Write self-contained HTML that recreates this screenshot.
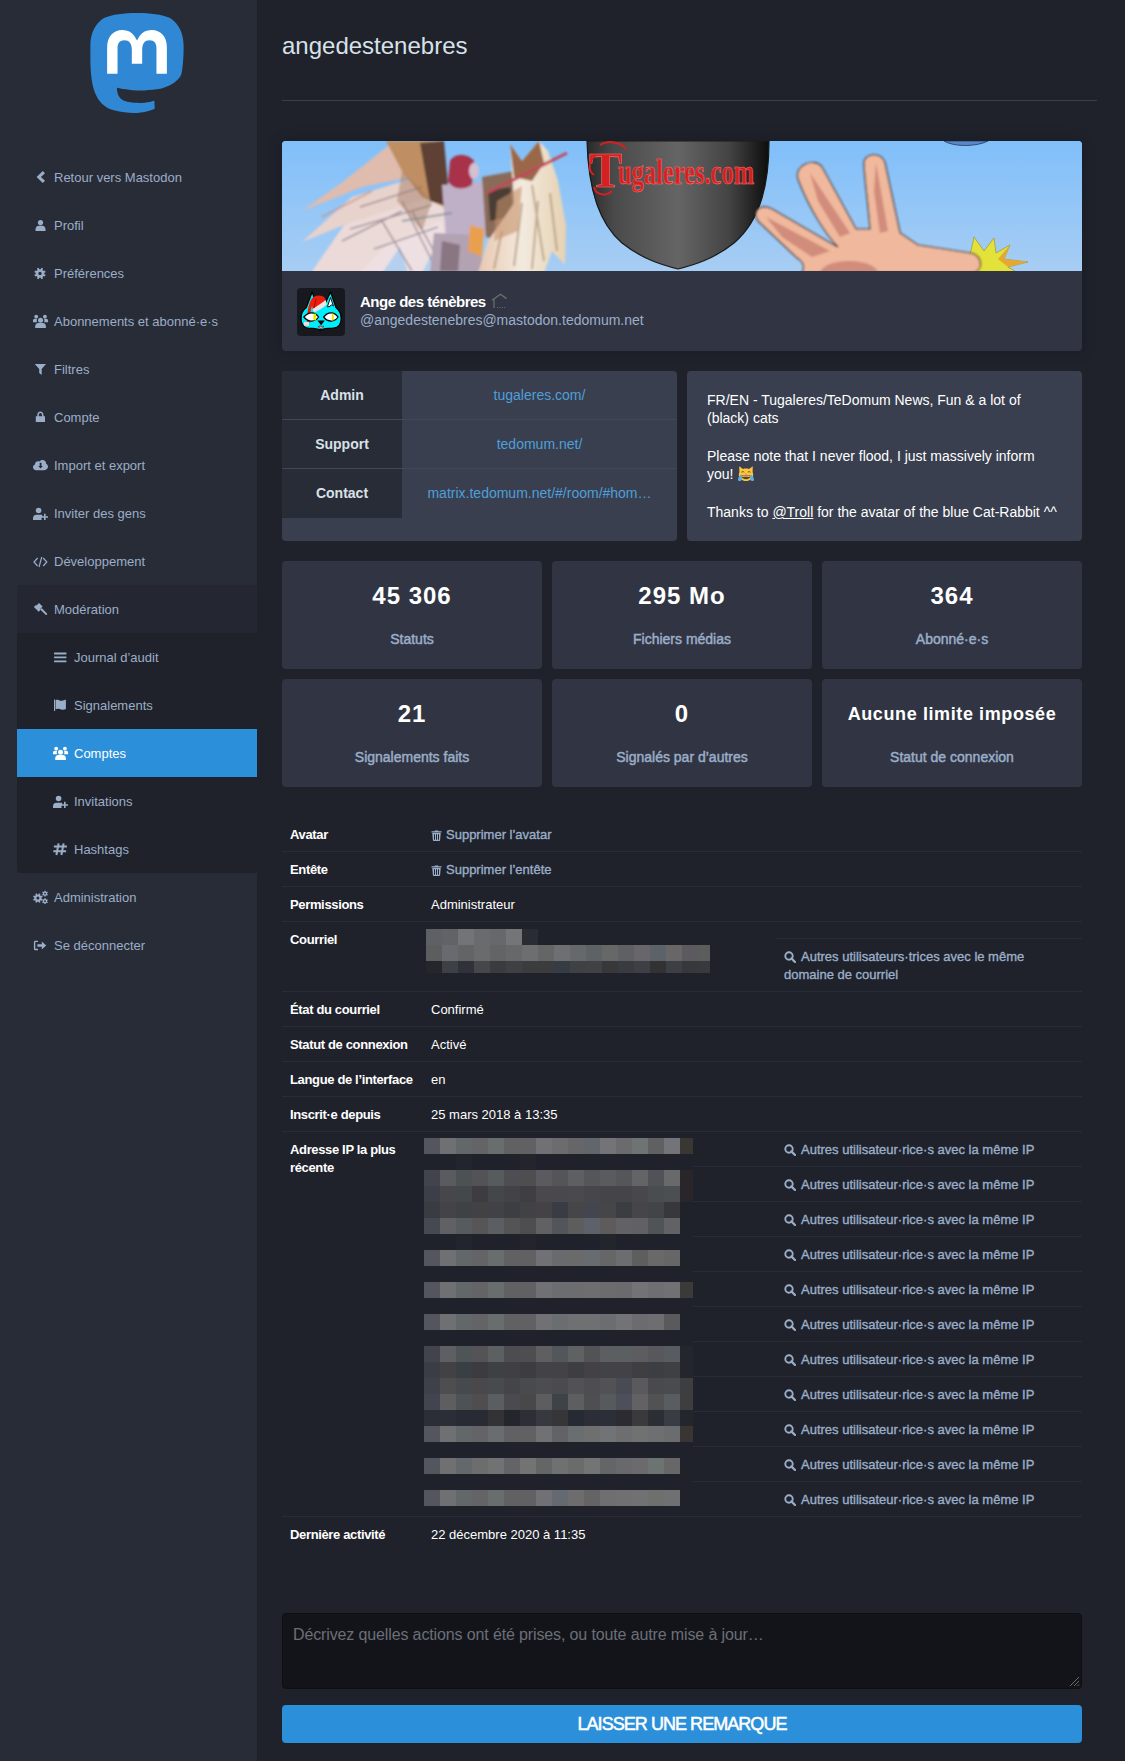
<!DOCTYPE html>
<html><head><meta charset="utf-8">
<style>
*{box-sizing:border-box;margin:0;padding:0}
html,body{width:1125px;height:1761px;overflow:hidden}
body{background:#1f222b;font-family:"Liberation Sans",sans-serif;color:#fff;position:relative}
.abs{position:absolute}
#side{position:absolute;left:0;top:0;width:257px;height:1761px;background:#282c37}
#logo{position:absolute;left:90px;top:13px;width:94px;height:100px}
.nav{position:absolute;left:17px;width:240px;height:48px;font-size:13px;line-height:18px;color:#9baec8;white-space:nowrap}
.nav svg{position:absolute;top:16px;width:16px;height:16px;fill:currentColor;overflow:visible}
.nav span{position:absolute;top:16px}
#modbg{position:absolute;left:17px;top:585px;width:240px;height:288px;background:#1f222b;border-radius:4px 0 0 4px;overflow:hidden}
#modhead{position:absolute;left:0;top:0;width:240px;height:48px;background:#242731}
.nav.active{background:#2b90d9;color:#fff}
.dl{display:flex;height:49px;border-bottom:1px solid #42485a}.dl:last-child{border-bottom:0}
.dt{width:120px;flex:0 0 auto;padding:14px;text-align:center;background:#282c37;color:#d9e1e8;font-weight:bold;white-space:nowrap}
.dd{flex:1 1 auto;padding:14px;text-align:center;white-space:nowrap;overflow:hidden}
.dd a{color:#4e9fd9;text-decoration:none}
.stat{position:absolute;width:260px;height:108px;background:#313543;border-radius:4px;padding:20px;text-align:center}
.num{font-size:24px;line-height:30px;font-weight:bold;color:#fff;margin-bottom:20px;white-space:nowrap;letter-spacing:1px}
.num.txt{font-size:18px;letter-spacing:0.6px}
.lbl{font-size:14px;line-height:17px;color:#9baec8;font-weight:normal;-webkit-text-stroke:0.45px #9baec8}
.hl{position:absolute;height:1px;background:#282c37}
.th,.td,.lk{position:absolute;font-size:13px;line-height:18px;white-space:nowrap}
.th{font-weight:bold;color:#fff;letter-spacing:-0.35px}
.td{color:#fff}
.lk{color:#9baec8;-webkit-text-stroke:0.35px #9baec8}
.lk .ic{position:absolute;fill:currentColor}
</style></head><body>
<div id="side">
<svg id="logo" viewBox="0 0 216.4144 232.00976"><path d="M211.80734 139.0875c-3.18125 16.36625-28.4925 34.2775-57.5625 37.74875-15.15875 1.80875-30.08375 3.47125-45.99875 2.74125-26.0275-1.1925-46.565-6.2125-46.565-6.2125 0 2.53375.15625 4.94625.46875 7.2025 3.38375 25.68625 25.47 27.225 46.39125 27.9425 21.11625.7225 39.91875-5.20625 39.91875-5.20625l.8675 19.09s-14.77 7.93125-41.08125 9.39c-14.50875.7975-32.52375-.365-53.50625-5.91875C9.23234 213.82 1.40609 165.31125.20859 116.09125c-.365-14.61375-.14-28.39375-.14-39.91875 0-50.33 32.97625-65.0825 32.97625-65.0825C49.67234 3.45375 78.20359.2425 107.86484 0h.72875c29.66125.2425 58.21125 3.45375 74.8375 11.09 0 0 32.975 14.7525 32.975 65.0825 0 0 .41375 37.13375-4.59875 62.915" fill="#3088d4"/><path d="M177.50984 80.077v60.94125h-24.14375v-59.15c0-12.46875-5.24625-18.7975-15.74-18.7975-11.6025 0-17.4175 7.5075-17.4175 22.3525v32.37625H96.20734V85.42325c0-14.845-5.81625-22.3525-17.41875-22.3525-10.49375 0-15.74 6.32875-15.74 18.7975v59.15H38.90484V80.077c0-12.455 3.17125-22.3525 9.54125-29.675 6.56875-7.3225 15.17125-11.07625 25.85-11.07625 12.355 0 21.71125 4.74875 27.8975 14.2475l6.01375 10.08125 6.015-10.08125c6.185-9.49875 15.54125-14.2475 27.8975-14.2475 10.6775 0 19.28 3.75375 25.85 11.07625 6.36875 7.3225 9.54 17.22 9.54 29.675" fill="#fff"/></svg>
<div id="modbg"><div id="modhead"></div></div>
<div class="nav" style="top:153px"><svg viewBox="0 0 16 16" style="left:16px"><polygon points="9.8,2 12,4.2 7.9,8 12,11.8 9.8,14 3.6,8"/></svg><span style="left:37px">Retour vers Mastodon</span></div>
<div class="nav" style="top:201px"><svg viewBox="0 0 16 16" style="left:16px"><circle cx="7.5" cy="5.6" r="2.6"/><path d="M2.5 14v-1.6c0-2.1 1.4-3.6 3.2-3.6h3.6c1.8 0 3.2 1.5 3.2 3.6V14z"/></svg><span style="left:37px">Profil</span></div>
<div class="nav" style="top:249px"><svg viewBox="0 0 16 16" style="left:16px"><path fill-rule="evenodd" d="M11.30 8.50 L11.23 9.28 L12.65 9.81 L11.92 11.57 L10.54 10.94 L10.04 11.54 L9.44 12.04 L10.07 13.42 L8.31 14.15 L7.78 12.73 L7.00 12.80 L6.22 12.73 L5.69 14.15 L3.93 13.42 L4.56 12.04 L3.96 11.54 L3.46 10.94 L2.08 11.57 L1.35 9.81 L2.77 9.28 L2.70 8.50 L2.77 7.72 L1.35 7.19 L2.08 5.43 L3.46 6.06 L3.96 5.46 L4.56 4.96 L3.93 3.58 L5.69 2.85 L6.22 4.27 L7.00 4.20 L7.78 4.27 L8.31 2.85 L10.07 3.58 L9.44 4.96 L10.04 5.46 L10.54 6.06 L11.92 5.43 L12.65 7.19 L11.23 7.72ZM8.70 8.50 A1.7 1.7 0 1 0 5.30 8.50 A1.7 1.7 0 1 0 8.70 8.50Z"/></svg><span style="left:37px">Préférences</span></div>
<div class="nav" style="top:297px"><svg viewBox="0 0 16 16" style="left:16px"><circle cx="3.2" cy="3.6" r="1.9"/><circle cx="11.9" cy="3.6" r="1.9"/><path d="M0 9.2V7.6c0-1 .7-1.9 1.7-1.9h2.6c-.4.5-.6 1.2-.6 1.9 0 .6.1 1.1.4 1.6zM15.1 9.2V7.6c0-1-.7-1.9-1.7-1.9h-2.6c.4.5.6 1.2.6 1.9 0 .6-.1 1.1-.4 1.6z"/><circle cx="7.55" cy="7.3" r="2.5"/><path d="M2.2 15v-1.6c0-2 1.3-3.4 3-3.4h4.7c1.7 0 3 1.4 3 3.4V15z"/></svg><span style="left:37px">Abonnements et abonné·e·s</span></div>
<div class="nav" style="top:345px"><svg viewBox="0 0 16 16" style="left:16px"><polygon points="1.8,3 13,3 8.7,8 8.7,14 6.2,12 6.2,8"/></svg><span style="left:37px">Filtres</span></div>
<div class="nav" style="top:393px"><svg viewBox="0 0 16 16" style="left:16px"><path fill-rule="evenodd" d="M2.8 7.2h9.2V13H2.8zM4.3 7.2V5.9c0-2 1.3-3.3 3.1-3.3s3.1 1.3 3.1 3.3v1.3H9V6c0-1.1-.6-1.9-1.6-1.9S5.8 4.9 5.8 6v1.2z"/></svg><span style="left:37px">Compte</span></div>
<div class="nav" style="top:441px"><svg viewBox="0 0 16 16" style="left:16px"><path fill-rule="evenodd" d="M3.2 13.2C1.4 13.2 0 11.9 0 10.3c0-1.3.8-2.3 2-2.7 0-.1 0-.2 0-.3 0-1.7 1.4-3 3.1-3 .5 0 1 .1 1.4.3C7.1 3.6 8.2 3 9.5 3c2 0 3.6 1.5 3.6 3.4v.3c1.1.5 1.9 1.6 1.9 2.9 0 2-1.6 3.6-3.6 3.6z M6.7 5.8v3.1H5.3l2.3 2.6 2.3-2.6H8.5V5.8z"/></svg><span style="left:37px">Import et export</span></div>
<div class="nav" style="top:489px"><svg viewBox="0 0 16 16" style="left:16px"><circle cx="5.6" cy="5.5" r="2.8"/><path d="M0 15v-1.9c0-2 1.4-3.4 3.2-3.4h4.8c.5 0 1 .1 1.4.3-.2.4-.3.7-.3 1.1v1.5H9.3c-.5 0-.9.5-.9 1v.4c0 .5.4 1 .9 1z"/><path d="M11 8.8h1.6v2.4H15v1.6h-2.4v2.2H11v-2.2H8.8v-1.6H11z"/></svg><span style="left:37px">Inviter des gens</span></div>
<div class="nav" style="top:537px"><svg viewBox="0 0 16 16" style="left:16px"><path d="M4.6 5L1 9l3.6 4M10.2 5l3.6 4-3.6 4M8.8 4L6 14" fill="none" stroke="currentColor" stroke-width="1.2"/></svg><span style="left:37px">Développement</span></div>
<div class="nav" style="top:585px"><svg viewBox="0 0 16 16" style="left:16px"><path d="M6 2L9.6 5.6 6.6 8.6 3 5z"/><path d="M.7 8.2L2.7 6.2 7.5 11 5.5 13z" transform="translate(.2 -2.2)"/><path d="M7.2 8.4L8.6 7l5.4 5.4c.3.3.3.8 0 1.1l-.3.3c-.3.3-.8.3-1.1 0z"/></svg><span style="left:37px">Modération</span></div>
<div class="nav" style="top:633px"><svg viewBox="0 0 16 16" style="left:36px"><path d="M1.1 3.6h12.3v1.8H1.1zM1.1 7.5h12.3v1.8H1.1zM1.1 11.4h12.3v1.8H1.1z"/></svg><span style="left:57px">Journal d’audit</span></div>
<div class="nav" style="top:681px"><svg viewBox="0 0 16 16" style="left:36px"><path d="M1 2.6h1.1V14H1z"/><path d="M2.6 3.3c1-.5 2.2-.6 3.4-.1 1.4.6 2.5.7 3.8.3.9-.3 1.7-.5 2.2-.8h.9v9.3c-.8.5-1.8.7-3 .8-1.3 0-2.1-.6-3.5-.9-1.3-.3-2.7-.2-3.8.4z"/></svg><span style="left:57px">Signalements</span></div>
<div class="nav active" style="top:729px"><svg viewBox="0 0 16 16" style="left:36px"><circle cx="3.2" cy="3.6" r="1.9"/><circle cx="11.9" cy="3.6" r="1.9"/><path d="M0 9.2V7.6c0-1 .7-1.9 1.7-1.9h2.6c-.4.5-.6 1.2-.6 1.9 0 .6.1 1.1.4 1.6zM15.1 9.2V7.6c0-1-.7-1.9-1.7-1.9h-2.6c.4.5.6 1.2.6 1.9 0 .6-.1 1.1-.4 1.6z"/><circle cx="7.55" cy="7.3" r="2.5"/><path d="M2.2 15v-1.6c0-2 1.3-3.4 3-3.4h4.7c1.7 0 3 1.4 3 3.4V15z"/></svg><span style="left:57px">Comptes</span></div>
<div class="nav" style="top:777px"><svg viewBox="0 0 16 16" style="left:36px"><circle cx="5.6" cy="5.5" r="2.8"/><path d="M0 15v-1.9c0-2 1.4-3.4 3.2-3.4h4.8c.5 0 1 .1 1.4.3-.2.4-.3.7-.3 1.1v1.5H9.3c-.5 0-.9.5-.9 1v.4c0 .5.4 1 .9 1z"/><path d="M11 8.8h1.6v2.4H15v1.6h-2.4v2.2H11v-2.2H8.8v-1.6H11z"/></svg><span style="left:57px">Invitations</span></div>
<div class="nav" style="top:825px"><svg viewBox="0 0 16 16" style="left:36px"><path d="M3.4 14L5.6 2.4M8.4 14L10.6 2.4M.9 5.6h13M.3 10.2h12.8" fill="none" stroke="currentColor" stroke-width="2"/></svg><span style="left:57px">Hashtags</span></div>
<div class="nav" style="top:873px"><svg viewBox="0 0 16 16" style="left:16px"><path fill-rule="evenodd" d="M8.50 9.10 L8.44 9.75 L9.67 10.21 L9.06 11.69 L7.86 11.14 L7.45 11.65 L6.94 12.06 L7.49 13.26 L6.01 13.87 L5.55 12.64 L4.90 12.70 L4.25 12.64 L3.79 13.87 L2.31 13.26 L2.86 12.06 L2.35 11.65 L1.94 11.14 L0.74 11.69 L0.13 10.21 L1.36 9.75 L1.30 9.10 L1.36 8.45 L0.13 7.99 L0.74 6.51 L1.94 7.06 L2.35 6.55 L2.86 6.14 L2.31 4.94 L3.79 4.33 L4.25 5.56 L4.90 5.50 L5.55 5.56 L6.01 4.33 L7.49 4.94 L6.94 6.14 L7.45 6.55 L7.86 7.06 L9.06 6.51 L9.67 7.99 L8.44 8.45ZM6.40 9.10 A1.5 1.5 0 1 0 3.40 9.10 A1.5 1.5 0 1 0 6.40 9.10Z"/><path fill-rule="evenodd" d="M14.20 4.60 L14.14 5.10 L14.88 5.45 L14.18 6.67 L13.51 6.20 L13.10 6.51 L12.64 6.71 L12.70 7.52 L11.30 7.52 L11.36 6.71 L10.90 6.51 L10.49 6.20 L9.82 6.67 L9.12 5.45 L9.86 5.10 L9.80 4.60 L9.86 4.10 L9.12 3.75 L9.82 2.53 L10.49 3.00 L10.90 2.69 L11.36 2.49 L11.30 1.68 L12.70 1.68 L12.64 2.49 L13.10 2.69 L13.51 3.00 L14.18 2.53 L14.88 3.75 L14.14 4.10ZM12.90 4.60 A0.9 0.9 0 1 0 11.10 4.60 A0.9 0.9 0 1 0 12.90 4.60Z"/><path fill-rule="evenodd" d="M14.20 12.20 L14.14 12.70 L14.88 13.05 L14.18 14.27 L13.51 13.80 L13.10 14.11 L12.64 14.31 L12.70 15.12 L11.30 15.12 L11.36 14.31 L10.90 14.11 L10.49 13.80 L9.82 14.27 L9.12 13.05 L9.86 12.70 L9.80 12.20 L9.86 11.70 L9.12 11.35 L9.82 10.13 L10.49 10.60 L10.90 10.29 L11.36 10.09 L11.30 9.28 L12.70 9.28 L12.64 10.09 L13.10 10.29 L13.51 10.60 L14.18 10.13 L14.88 11.35 L14.14 11.70ZM12.90 12.20 A0.9 0.9 0 1 0 11.10 12.20 A0.9 0.9 0 1 0 12.90 12.20Z"/></svg><span style="left:37px">Administration</span></div>
<div class="nav" style="top:921px"><svg viewBox="0 0 16 16" style="left:16px"><path d="M.9 5.2c0-.8.6-1.5 1.4-1.5H5V5H2.3v6.8H5v1.4H2.3c-.8 0-1.4-.7-1.4-1.5z"/><path d="M4.4 7.3h4.4V4.6l4.4 3.9-4.4 3.9V9.7H4.4z"/></svg><span style="left:37px">Se déconnecter</span></div>
</div>
<div class="abs" style="left:282px;top:32px;font-size:24px;line-height:28px;color:#d9e1e8;white-space:nowrap">angedestenebres</div>
<div class="abs" style="left:282px;top:100px;width:815px;height:1px;background:#393f4f"></div>

<!-- card -->
<div id="card" class="abs" style="left:282px;top:141px;width:800px;height:210px;border-radius:4px;box-shadow:0 0 15px rgba(0,0,0,.2);background:#313543">
  <div id="banner" class="abs" style="left:0;top:0;width:800px;height:130px;border-radius:4px 4px 0 0;overflow:hidden;background:linear-gradient(#80bffa,#a6cdf5)">
  <svg width="800" height="130" viewBox="0 0 800 130" style="position:absolute;left:0;top:0">
<defs>
<linearGradient id="sky" x1="0" y1="0" x2="0" y2="1"><stop offset="0" stop-color="#80bffa"/><stop offset="1" stop-color="#a7cdf3"/></linearGradient>
<linearGradient id="shg" x1="0" y1="0" x2="1" y2="0"><stop offset="0" stop-color="#2a2a2a"/><stop offset=".15" stop-color="#4a4a4a"/><stop offset=".5" stop-color="#656565"/><stop offset=".78" stop-color="#444"/><stop offset="1" stop-color="#0d0d0d"/></linearGradient>
<linearGradient id="lw" x1="0" y1="0" x2="1" y2="0"><stop offset="0" stop-color="#d9a9a0"/><stop offset=".5" stop-color="#ead6d6"/><stop offset="1" stop-color="#d8c2cc"/></linearGradient>
<linearGradient id="rw" x1="0" y1="0" x2="1" y2="0"><stop offset="0" stop-color="#e8c8b0"/><stop offset=".5" stop-color="#f3eadf"/><stop offset="1" stop-color="#e6d2b2"/></linearGradient>
<filter id="bl" x="-5%" y="-5%" width="110%" height="110%"><feGaussianBlur stdDeviation=".8"/></filter>
<filter id="bl2" x="-20%" y="-20%" width="140%" height="140%"><feGaussianBlur stdDeviation="2"/></filter>
</defs>
<rect width="800" height="130" fill="url(#sky)"/>
<g filter="url(#bl)">
<!-- left wing feathers -->
<path d="M20 70 L62 40 L112 0 L160 0 L160 30 L80 46 Z" fill="#dfbcae"/>
<path d="M20 101 L70 56 L160 28 L162 60 L62 84 Z" fill="#e8d2cc"/>
<path d="M29 132 L62 84 L160 52 L165 95 L78 132 Z" fill="#ebdad8"/>
<path d="M78 132 L110 100 L160 80 L168 132 Z" fill="#eee0e2"/>
<path d="M100 132 L118 106 L126 132 Z" fill="#b4d0ee"/>
<path d="M140 132 L150 112 L154 132 Z" fill="#b4d0ee"/>
<path d="M104 0 L160 0 L162 66 L140 56 L120 30 Z" fill="#bf8e62"/>
<path d="M138 2 L162 0 L168 66 L148 60 Z" fill="#5e4034"/>
<path d="M78 66 L140 46 M68 88 L150 64 M92 108 L156 86 M120 60 L150 120 M100 80 L130 130 M130 70 L160 125 M60 100 L120 70" stroke="#7a6a78" stroke-width="1.6" opacity=".6"/>
<path d="M120 30 L150 60 L140 90 L115 60 Z" fill="#a07860" opacity=".45"/>
<path d="M40 76 L90 50" stroke="#c89080" stroke-width="2" opacity=".6"/>
<!-- figure -->
<path d="M160 44 L206 40 L216 56 L212 92 L196 100 L164 96 Z" fill="#bfb0c8"/>
<path d="M152 92 L200 94 L200 132 L148 132 Z" fill="#b2a2b2"/>
<path d="M160 100 L178 104 L176 130 L158 130 Z" fill="#8a7482"/>
<path d="M188 84 L202 88 L200 116 L186 110 Z" fill="#e8a050"/>
<path d="M200 36 L232 30 L238 70 L226 100 L204 96 Z" fill="#8a6a58"/><path d="M206 50 L228 46 L232 74 L208 80 Z" fill="#4a3c36"/>
<path d="M168 20 C172 12 186 12 192 20 L190 44 C180 50 170 48 166 40 Z" fill="#a8304a"/>
<ellipse cx="192" cy="30" rx="5" ry="8" fill="#d4c0d0"/>
<path d="M120 80 L170 72" stroke="#7a8a90" stroke-width="2" opacity=".7"/>
<!-- right wing -->
<path d="M228 3 L240 20 L257 0 L266 10 L276 40 L284 85 L283 124 L270 110 L262 132 L196 132 L206 100 L232 62 Z" fill="url(#rw)"/>
<path d="M228 3 L240 20 L257 0 L262 22 L250 40 L232 36 Z" fill="#9a6848"/>
<path d="M250 44 L262 120 M240 62 L232 125 M268 52 L275 110 M220 90 L212 128 M256 60 L250 128" stroke="#a88a6a" stroke-width="2.2" opacity=".6"/><path d="M215 60 L240 45 L236 90 L212 100 Z" fill="#c8926a" opacity=".6"/>
<path d="M205 52 L285 12" stroke="#c04a5a" stroke-width="3"/>
</g>
<!-- shield -->
<path d="M305 0 H487 C487 40 480 78 452 102 C432 118 412 124 396 128 C380 124 360 118 340 102 C314 80 306 42 305 0 Z" fill="url(#shg)" stroke="#1a1a1a" stroke-width="1.2"/>
<g fill="#d42020" stroke="#ff7070" stroke-width=".6">
<text x="307" y="46" font-family="Liberation Serif" font-weight="bold" font-size="50">T</text>
<text x="336" y="43" font-family="Liberation Serif" font-weight="bold" font-size="36" textLength="136" lengthAdjust="spacingAndGlyphs">ugaleres.com</text>
</g>
<path d="M314 14 C306 20 306 30 312 34 M312 46 C314 54 324 56 330 50 M318 4 C326 -2 340 2 344 8" stroke="#d42020" stroke-width="2" fill="none"/>
<!-- blue circle top -->
<path d="M662 0 C672 6 694 6 706 0 Z" fill="#5a88c4" stroke="#2e4e7e" stroke-width="1"/>
<!-- starburst -->
<path d="M672 112 L688 114 L692 96 L702 110 L712 97 L714 112 L728 104 L722 118 L746 121 L726 126 L736 132 L688 132 Z" fill="#e3e23a" stroke="#9a8a20" stroke-width=".6"/>
<path d="M716 118 L728 104 L722 118 L746 121 L726 126 Z" fill="#e6a830"/>
<!-- hand -->
<g filter="url(#bl)">
<path d="M476 80 C470 70 478 62 490 68 L552 104 L556 106 C546 96 528 70 516 38 C512 24 532 16 540 26 L574 88 L588 88 C586 60 582 34 582 22 C582 12 600 10 603 22 L618 92 L636 104 L688 112 C700 114 702 128 692 132 L520 132 C524 124 520 120 514 116 Z" fill="#f0b89c" stroke="#3a2a25" stroke-width="1.2"/>
<path d="M484 76 L548 110 L530 116 L500 96 Z M528 32 L568 92 L558 96 L536 60 Z M594 22 L606 90 L598 92 L592 50 Z" fill="#d18c7c"/>
<ellipse cx="567" cy="134" rx="30" ry="14" fill="#d18c7c"/>
</g>
</svg>


  </div>
  <div class="abs" style="left:15px;top:147px;width:48px;height:48px;border-radius:4px;background:#17191e;overflow:hidden">
  <svg width="48" height="48" viewBox="0 0 48 48" style="position:absolute;left:0;top:0">
<path d="M15.1 4 L9.3 19.5 C6 22 4 26 4 30.4 C4 36 7 39.8 12 40.3 C15.5 40.6 18 40.2 19.5 40.8 L23.9 42 L28 40.6 C30 40.2 33 40.6 36.5 40.2 C41.5 39.6 44.2 36 44.2 30.4 C44.2 26 42 22 39 19.5 L33.6 4 L27.6 16.5 C25.5 16 22 16 20 16.5 Z" fill="#00eefc" stroke="#000" stroke-width="1.3" stroke-linejoin="round"/>
<path d="M30.4 18.8 L33.5 9.5 L36.4 18 C35 16.5 33.5 16.5 33 18.5 Z" fill="#fff" stroke="#000" stroke-width=".9"/>
<path d="M10 35 C10 26 11 16 15 10.5 C18 7 24 6.5 28 10 L29.5 15 C25 18 20 21 16.5 23.5 L15 18 C13.5 22 12.8 28 12.6 35 Z" fill="#ee1c0a"/>
<path d="M15.6 21 C20 18 25 15 28.6 12 L29.8 16.5 C26 20 21 23 16.8 24.5 Z" fill="#ece4e4"/>
<path d="M19 11 L17 20" stroke="#900" stroke-width=".8"/>
<rect x="7" y="34" width="5" height="3.8" fill="#f0dada"/>
<path d="M6.8 29 C9.5 26 12 24.8 14.5 24.8 C17 24.8 19.5 26 21.6 29 C19.5 32 17 33.1 14.5 33.1 C12 33.1 9.5 32 6.8 29Z" fill="#fff" stroke="#000" stroke-width="1.3"/>
<rect x="16.4" y="25.6" width="2.6" height="6.8" fill="#e8e800"/>
<path d="M26.7 29 C29 26 31.5 24.8 34 24.8 C36.5 24.8 39 26 41 29 C39 32 36.5 33.1 34 33.1 C31.5 33.1 29 32 26.7 29Z" fill="#fff" stroke="#000" stroke-width="1.3"/>
<rect x="34.8" y="25.6" width="2" height="6.8" fill="#e8e800"/>
<path d="M21.6 33.2 H26.6 L24.1 36.4 Z" fill="#000" stroke="#000" stroke-width="1.2"/>
<path d="M21.2 38.2 C23 41.5 25 41.5 26.7 38.2 Z" fill="#f59ab0" stroke="#000" stroke-width=".5"/>
</svg>


  </div>
  <div class="abs" style="left:78px;top:152px;white-space:nowrap">
    <div style="font-size:15px;line-height:18px;font-weight:bold;color:#fff;letter-spacing:-0.5px">Ange des ténèbres</div>
    <div style="font-size:14px;line-height:18px;color:#9baec8">@angedestenebres@mastodon.tedomum.net</div>
  </div>
</div>

<!-- fields -->
<div class="abs" style="left:282px;top:371px;width:395px;height:170px;border-radius:4px;background:#393f4f;overflow:hidden;font-size:14px;line-height:20px">
  <div class="dl"><div class="dt">Admin</div><div class="dd"><a>tugaleres.com/</a></div></div>
  <div class="dl"><div class="dt">Support</div><div class="dd"><a>tedomum.net/</a></div></div>
  <div class="dl"><div class="dt">Contact</div><div class="dd"><a>matrix.tedomum.net/#/room/#hom…</a></div></div>
</div>
<div class="abs" style="left:687px;top:371px;width:395px;height:170px;border-radius:4px;background:#393f4f;padding:20px;font-size:14px;line-height:18px;color:#fff">
  <p style="margin-bottom:20px">FR/EN - Tugaleres/TeDomum News, Fun &amp; a lot of (black) cats</p>
  <p style="margin-bottom:20px">Please note that I never flood, I just massively inform you!</p>
  <p>Thanks to <u>@Troll</u> for the avatar of the blue Cat-Rabbit ^^</p>
</div>

<!-- stats -->
<div class="stat" style="left:282px;top:561px"><div class="num">45 306</div><div class="lbl">Statuts</div></div>
<div class="stat" style="left:552px;top:561px"><div class="num">295 Mo</div><div class="lbl">Fichiers médias</div></div>
<div class="stat" style="left:822px;top:561px"><div class="num">364</div><div class="lbl">Abonné·e·s</div></div>
<div class="stat" style="left:282px;top:679px"><div class="num">21</div><div class="lbl">Signalements faits</div></div>
<div class="stat" style="left:552px;top:679px"><div class="num">0</div><div class="lbl">Signalés par d’autres</div></div>
<div class="stat" style="left:822px;top:679px"><div class="num txt">Aucune limite imposée</div><div class="lbl">Statut de connexion</div></div>

<div class="th" style="left:290px;top:826px">Avatar</div>
<div class="lk" style="left:431px;top:826px"><svg class="ic" viewBox="0 0 11 11" style="width:11px;height:11px;left:0;top:4px"><path d="M0.5 1.2h3l.5-.8h3l.5.8h3v1.2H.5z"/><path fill-rule="evenodd" d="M1.3 3h8.4l-.6 7.2c0 .5-.4.8-.8.8H2.7c-.4 0-.8-.3-.8-.8zM3 4.2v5.5h1V4.2zM5 4.2v5.5h1V4.2zM7 4.2v5.5h1V4.2z"/></svg><span style="padding-left:15px">Supprimer l’avatar</span></div>
<div class="hl" style="left:282px;top:851px;width:800px"></div>
<div class="th" style="left:290px;top:861px">Entête</div>
<div class="lk" style="left:431px;top:861px"><svg class="ic" viewBox="0 0 11 11" style="width:11px;height:11px;left:0;top:4px"><path d="M0.5 1.2h3l.5-.8h3l.5.8h3v1.2H.5z"/><path fill-rule="evenodd" d="M1.3 3h8.4l-.6 7.2c0 .5-.4.8-.8.8H2.7c-.4 0-.8-.3-.8-.8zM3 4.2v5.5h1V4.2zM5 4.2v5.5h1V4.2zM7 4.2v5.5h1V4.2z"/></svg><span style="padding-left:15px">Supprimer l’entête</span></div>
<div class="hl" style="left:282px;top:886px;width:800px"></div>
<div class="th" style="left:290px;top:896px">Permissions</div>
<div class="td" style="left:431px;top:896px">Administrateur</div>
<div class="hl" style="left:282px;top:921px;width:800px"></div>
<div class="th" style="left:290px;top:931px">Courriel</div>
<div class="hl" style="left:776px;top:938px;width:306px"></div>
<div class="lk" style="left:784px;top:948px;white-space:normal"><svg class="ic" viewBox="0 0 12 12" style="width:12px;height:12px;left:0;top:3px"><circle cx="5" cy="5" r="3.7" fill="none" stroke="currentColor" stroke-width="1.9"/><path d="M7.4 7.4L11 11" stroke="currentColor" stroke-width="2.2" stroke-linecap="round"/></svg><span style="padding-left:17px">Autres utilisateurs·trices avec le même<br>domaine de courriel</span></div>
<div class="hl" style="left:282px;top:991px;width:800px"></div>
<div class="th" style="left:290px;top:1001px">État du courriel</div>
<div class="td" style="left:431px;top:1001px">Confirmé</div>
<div class="hl" style="left:282px;top:1026px;width:800px"></div>
<div class="th" style="left:290px;top:1036px">Statut de connexion</div>
<div class="td" style="left:431px;top:1036px">Activé</div>
<div class="hl" style="left:282px;top:1061px;width:800px"></div>
<div class="th" style="left:290px;top:1071px">Langue de l’interface</div>
<div class="td" style="left:431px;top:1071px">en</div>
<div class="hl" style="left:282px;top:1096px;width:800px"></div>
<div class="th" style="left:290px;top:1106px">Inscrit·e depuis</div>
<div class="td" style="left:431px;top:1106px">25 mars 2018 à 13:35</div>
<div class="hl" style="left:282px;top:1131px;width:800px"></div>
<div class="th" style="left:290px;top:1141px">Adresse IP la plus<br>récente</div>
<div class="lk" style="left:784px;top:1141px"><svg class="ic" viewBox="0 0 12 12" style="width:12px;height:12px;left:0;top:3px"><circle cx="5" cy="5" r="3.7" fill="none" stroke="currentColor" stroke-width="1.9"/><path d="M7.4 7.4L11 11" stroke="currentColor" stroke-width="2.2" stroke-linecap="round"/></svg><span style="padding-left:17px">Autres utilisateur·rice·s avec la même IP</span></div>
<div class="hl" style="left:423px;top:1166px;width:659px"></div>
<div class="lk" style="left:784px;top:1176px"><svg class="ic" viewBox="0 0 12 12" style="width:12px;height:12px;left:0;top:3px"><circle cx="5" cy="5" r="3.7" fill="none" stroke="currentColor" stroke-width="1.9"/><path d="M7.4 7.4L11 11" stroke="currentColor" stroke-width="2.2" stroke-linecap="round"/></svg><span style="padding-left:17px">Autres utilisateur·rice·s avec la même IP</span></div>
<div class="hl" style="left:423px;top:1201px;width:659px"></div>
<div class="lk" style="left:784px;top:1211px"><svg class="ic" viewBox="0 0 12 12" style="width:12px;height:12px;left:0;top:3px"><circle cx="5" cy="5" r="3.7" fill="none" stroke="currentColor" stroke-width="1.9"/><path d="M7.4 7.4L11 11" stroke="currentColor" stroke-width="2.2" stroke-linecap="round"/></svg><span style="padding-left:17px">Autres utilisateur·rice·s avec la même IP</span></div>
<div class="hl" style="left:423px;top:1236px;width:659px"></div>
<div class="lk" style="left:784px;top:1246px"><svg class="ic" viewBox="0 0 12 12" style="width:12px;height:12px;left:0;top:3px"><circle cx="5" cy="5" r="3.7" fill="none" stroke="currentColor" stroke-width="1.9"/><path d="M7.4 7.4L11 11" stroke="currentColor" stroke-width="2.2" stroke-linecap="round"/></svg><span style="padding-left:17px">Autres utilisateur·rice·s avec la même IP</span></div>
<div class="hl" style="left:423px;top:1271px;width:659px"></div>
<div class="lk" style="left:784px;top:1281px"><svg class="ic" viewBox="0 0 12 12" style="width:12px;height:12px;left:0;top:3px"><circle cx="5" cy="5" r="3.7" fill="none" stroke="currentColor" stroke-width="1.9"/><path d="M7.4 7.4L11 11" stroke="currentColor" stroke-width="2.2" stroke-linecap="round"/></svg><span style="padding-left:17px">Autres utilisateur·rice·s avec la même IP</span></div>
<div class="hl" style="left:423px;top:1306px;width:659px"></div>
<div class="lk" style="left:784px;top:1316px"><svg class="ic" viewBox="0 0 12 12" style="width:12px;height:12px;left:0;top:3px"><circle cx="5" cy="5" r="3.7" fill="none" stroke="currentColor" stroke-width="1.9"/><path d="M7.4 7.4L11 11" stroke="currentColor" stroke-width="2.2" stroke-linecap="round"/></svg><span style="padding-left:17px">Autres utilisateur·rice·s avec la même IP</span></div>
<div class="hl" style="left:423px;top:1341px;width:659px"></div>
<div class="lk" style="left:784px;top:1351px"><svg class="ic" viewBox="0 0 12 12" style="width:12px;height:12px;left:0;top:3px"><circle cx="5" cy="5" r="3.7" fill="none" stroke="currentColor" stroke-width="1.9"/><path d="M7.4 7.4L11 11" stroke="currentColor" stroke-width="2.2" stroke-linecap="round"/></svg><span style="padding-left:17px">Autres utilisateur·rice·s avec la même IP</span></div>
<div class="hl" style="left:423px;top:1376px;width:659px"></div>
<div class="lk" style="left:784px;top:1386px"><svg class="ic" viewBox="0 0 12 12" style="width:12px;height:12px;left:0;top:3px"><circle cx="5" cy="5" r="3.7" fill="none" stroke="currentColor" stroke-width="1.9"/><path d="M7.4 7.4L11 11" stroke="currentColor" stroke-width="2.2" stroke-linecap="round"/></svg><span style="padding-left:17px">Autres utilisateur·rice·s avec la même IP</span></div>
<div class="hl" style="left:423px;top:1411px;width:659px"></div>
<div class="lk" style="left:784px;top:1421px"><svg class="ic" viewBox="0 0 12 12" style="width:12px;height:12px;left:0;top:3px"><circle cx="5" cy="5" r="3.7" fill="none" stroke="currentColor" stroke-width="1.9"/><path d="M7.4 7.4L11 11" stroke="currentColor" stroke-width="2.2" stroke-linecap="round"/></svg><span style="padding-left:17px">Autres utilisateur·rice·s avec la même IP</span></div>
<div class="hl" style="left:423px;top:1446px;width:659px"></div>
<div class="lk" style="left:784px;top:1456px"><svg class="ic" viewBox="0 0 12 12" style="width:12px;height:12px;left:0;top:3px"><circle cx="5" cy="5" r="3.7" fill="none" stroke="currentColor" stroke-width="1.9"/><path d="M7.4 7.4L11 11" stroke="currentColor" stroke-width="2.2" stroke-linecap="round"/></svg><span style="padding-left:17px">Autres utilisateur·rice·s avec la même IP</span></div>
<div class="hl" style="left:423px;top:1481px;width:659px"></div>
<div class="lk" style="left:784px;top:1491px"><svg class="ic" viewBox="0 0 12 12" style="width:12px;height:12px;left:0;top:3px"><circle cx="5" cy="5" r="3.7" fill="none" stroke="currentColor" stroke-width="1.9"/><path d="M7.4 7.4L11 11" stroke="currentColor" stroke-width="2.2" stroke-linecap="round"/></svg><span style="padding-left:17px">Autres utilisateur·rice·s avec la même IP</span></div>
<div class="hl" style="left:282px;top:1516px;width:800px"></div>
<div class="th" style="left:290px;top:1526px">Dernière activité</div>
<div class="td" style="left:431px;top:1526px">22 décembre 2020 à 11:35</div>
<svg class="abs" style="left:424px;top:1138px" width="269" height="368" shape-rendering="crispEdges"><rect x="0" y="0" width="16" height="16" fill="#53565f"/><rect x="16" y="0" width="16" height="16" fill="#6f7072"/><rect x="32" y="0" width="16" height="16" fill="#62686a"/><rect x="48" y="0" width="16" height="16" fill="#646366"/><rect x="64" y="0" width="16" height="16" fill="#6a6d6e"/><rect x="80" y="0" width="16" height="16" fill="#616163"/><rect x="96" y="0" width="16" height="16" fill="#616163"/><rect x="112" y="0" width="16" height="16" fill="#717175"/><rect x="128" y="0" width="16" height="16" fill="#6c6c6e"/><rect x="144" y="0" width="16" height="16" fill="#666567"/><rect x="160" y="0" width="16" height="16" fill="#62656b"/><rect x="176" y="0" width="16" height="16" fill="#737378"/><rect x="192" y="0" width="16" height="16" fill="#6b6b6d"/><rect x="208" y="0" width="16" height="16" fill="#6f7373"/><rect x="224" y="0" width="16" height="16" fill="#606062"/><rect x="240" y="0" width="16" height="16" fill="#737479"/><rect x="256" y="0" width="13" height="16" fill="#3a3632"/><rect x="0" y="16" width="16" height="16" fill="#1f222b"/><rect x="16" y="16" width="16" height="16" fill="#1f222b"/><rect x="32" y="16" width="16" height="16" fill="#22252c"/><rect x="48" y="16" width="16" height="16" fill="#1f222b"/><rect x="64" y="16" width="16" height="16" fill="#1f222b"/><rect x="80" y="16" width="16" height="16" fill="#1f222b"/><rect x="96" y="16" width="16" height="16" fill="#22252c"/><rect x="112" y="16" width="16" height="16" fill="#1f222b"/><rect x="128" y="16" width="16" height="16" fill="#1f222b"/><rect x="144" y="16" width="16" height="16" fill="#1f222b"/><rect x="160" y="16" width="16" height="16" fill="#1f222b"/><rect x="176" y="16" width="16" height="16" fill="#1f222b"/><rect x="192" y="16" width="16" height="16" fill="#1f222b"/><rect x="208" y="16" width="16" height="16" fill="#1f222b"/><rect x="224" y="16" width="16" height="16" fill="#1f222b"/><rect x="240" y="16" width="16" height="16" fill="#1f222b"/><rect x="256" y="16" width="13" height="16" fill="#1f222b"/><rect x="0" y="32" width="16" height="16" fill="#41444d"/><rect x="16" y="32" width="16" height="16" fill="#5a5b5e"/><rect x="32" y="32" width="16" height="16" fill="#4c5253"/><rect x="48" y="32" width="16" height="16" fill="#535256"/><rect x="64" y="32" width="16" height="16" fill="#575b5b"/><rect x="80" y="32" width="16" height="16" fill="#4e4d52"/><rect x="96" y="32" width="16" height="16" fill="#4e4e51"/><rect x="112" y="32" width="16" height="16" fill="#5b5a5e"/><rect x="128" y="32" width="16" height="16" fill="#555459"/><rect x="144" y="32" width="16" height="16" fill="#5e5f62"/><rect x="160" y="32" width="16" height="16" fill="#55565a"/><rect x="176" y="32" width="16" height="16" fill="#5a5b5f"/><rect x="192" y="32" width="16" height="16" fill="#55565a"/><rect x="208" y="32" width="16" height="16" fill="#636465"/><rect x="224" y="32" width="16" height="16" fill="#4f5256"/><rect x="240" y="32" width="16" height="16" fill="#68696a"/><rect x="256" y="32" width="13" height="16" fill="#2a2528"/><rect x="0" y="48" width="16" height="16" fill="#3c3f49"/><rect x="16" y="48" width="16" height="16" fill="#47464a"/><rect x="32" y="48" width="16" height="16" fill="#434849"/><rect x="48" y="48" width="16" height="16" fill="#3e3c40"/><rect x="64" y="48" width="16" height="16" fill="#43464a"/><rect x="80" y="48" width="16" height="16" fill="#434347"/><rect x="96" y="48" width="16" height="16" fill="#3f3f43"/><rect x="112" y="48" width="16" height="16" fill="#4a484c"/><rect x="128" y="48" width="16" height="16" fill="#49484c"/><rect x="144" y="48" width="16" height="16" fill="#4a4a4d"/><rect x="160" y="48" width="16" height="16" fill="#47474a"/><rect x="176" y="48" width="16" height="16" fill="#454549"/><rect x="192" y="48" width="16" height="16" fill="#454549"/><rect x="208" y="48" width="16" height="16" fill="#4a474c"/><rect x="224" y="48" width="16" height="16" fill="#4a4d50"/><rect x="240" y="48" width="16" height="16" fill="#4c4f52"/><rect x="256" y="48" width="13" height="16" fill="#2a2528"/><rect x="0" y="64" width="16" height="16" fill="#393c40"/><rect x="16" y="64" width="16" height="16" fill="#444448"/><rect x="32" y="64" width="16" height="16" fill="#3e4244"/><rect x="48" y="64" width="16" height="16" fill="#424245"/><rect x="64" y="64" width="16" height="16" fill="#424246"/><rect x="80" y="64" width="16" height="16" fill="#3c3e43"/><rect x="96" y="64" width="16" height="16" fill="#424245"/><rect x="112" y="64" width="16" height="16" fill="#454246"/><rect x="128" y="64" width="16" height="16" fill="#393c47"/><rect x="144" y="64" width="16" height="16" fill="#464548"/><rect x="160" y="64" width="16" height="16" fill="#434650"/><rect x="176" y="64" width="16" height="16" fill="#464547"/><rect x="192" y="64" width="16" height="16" fill="#3c3d42"/><rect x="208" y="64" width="16" height="16" fill="#46464a"/><rect x="224" y="64" width="16" height="16" fill="#424446"/><rect x="240" y="64" width="16" height="16" fill="#37373c"/><rect x="256" y="64" width="13" height="16" fill="#1f222b"/><rect x="0" y="80" width="16" height="16" fill="#454952"/><rect x="16" y="80" width="16" height="16" fill="#616163"/><rect x="32" y="80" width="16" height="16" fill="#565c5e"/><rect x="48" y="80" width="16" height="16" fill="#575558"/><rect x="64" y="80" width="16" height="16" fill="#5c5f62"/><rect x="80" y="80" width="16" height="16" fill="#545455"/><rect x="96" y="80" width="16" height="16" fill="#4e4d50"/><rect x="112" y="80" width="16" height="16" fill="#616163"/><rect x="128" y="80" width="16" height="16" fill="#525559"/><rect x="144" y="80" width="16" height="16" fill="#5d5d5e"/><rect x="160" y="80" width="16" height="16" fill="#5d616a"/><rect x="176" y="80" width="16" height="16" fill="#5e5c5b"/><rect x="192" y="80" width="16" height="16" fill="#626266"/><rect x="208" y="80" width="16" height="16" fill="#616064"/><rect x="224" y="80" width="16" height="16" fill="#505456"/><rect x="240" y="80" width="16" height="16" fill="#616263"/><rect x="256" y="80" width="13" height="16" fill="#1f222b"/><rect x="0" y="96" width="16" height="16" fill="#1f222b"/><rect x="16" y="96" width="16" height="16" fill="#1f222b"/><rect x="32" y="96" width="16" height="16" fill="#22252c"/><rect x="48" y="96" width="16" height="16" fill="#1f222b"/><rect x="64" y="96" width="16" height="16" fill="#1f222b"/><rect x="80" y="96" width="16" height="16" fill="#1f222b"/><rect x="96" y="96" width="16" height="16" fill="#22252c"/><rect x="112" y="96" width="16" height="16" fill="#1f222b"/><rect x="128" y="96" width="16" height="16" fill="#1f222b"/><rect x="144" y="96" width="16" height="16" fill="#1f222b"/><rect x="160" y="96" width="16" height="16" fill="#1f222b"/><rect x="176" y="96" width="16" height="16" fill="#22252c"/><rect x="192" y="96" width="16" height="16" fill="#1f222b"/><rect x="208" y="96" width="16" height="16" fill="#1f222b"/><rect x="224" y="96" width="16" height="16" fill="#1f222b"/><rect x="240" y="96" width="16" height="16" fill="#1f222b"/><rect x="256" y="96" width="13" height="16" fill="#1f222b"/><rect x="0" y="112" width="16" height="16" fill="#53565f"/><rect x="16" y="112" width="16" height="16" fill="#6f7072"/><rect x="32" y="112" width="16" height="16" fill="#62686a"/><rect x="48" y="112" width="16" height="16" fill="#646366"/><rect x="64" y="112" width="16" height="16" fill="#6a6d6e"/><rect x="80" y="112" width="16" height="16" fill="#616163"/><rect x="96" y="112" width="16" height="16" fill="#616163"/><rect x="112" y="112" width="16" height="16" fill="#717175"/><rect x="128" y="112" width="16" height="16" fill="#696a6d"/><rect x="144" y="112" width="16" height="16" fill="#6a6a6a"/><rect x="160" y="112" width="16" height="16" fill="#686b70"/><rect x="176" y="112" width="16" height="16" fill="#666666"/><rect x="192" y="112" width="16" height="16" fill="#6c6d71"/><rect x="208" y="112" width="16" height="16" fill="#5e5e5e"/><rect x="224" y="112" width="16" height="16" fill="#69696c"/><rect x="240" y="112" width="16" height="16" fill="#666666"/><rect x="256" y="112" width="13" height="16" fill="#1f222b"/><rect x="0" y="128" width="16" height="16" fill="#1f222b"/><rect x="16" y="128" width="16" height="16" fill="#1f222b"/><rect x="32" y="128" width="16" height="16" fill="#1f222b"/><rect x="48" y="128" width="16" height="16" fill="#1f222b"/><rect x="64" y="128" width="16" height="16" fill="#1f222b"/><rect x="80" y="128" width="16" height="16" fill="#1f222b"/><rect x="96" y="128" width="16" height="16" fill="#1f222b"/><rect x="112" y="128" width="16" height="16" fill="#1f222b"/><rect x="128" y="128" width="16" height="16" fill="#1f222b"/><rect x="144" y="128" width="16" height="16" fill="#1f222b"/><rect x="160" y="128" width="16" height="16" fill="#1f222b"/><rect x="176" y="128" width="16" height="16" fill="#1f222b"/><rect x="192" y="128" width="16" height="16" fill="#1f222b"/><rect x="208" y="128" width="16" height="16" fill="#1f222b"/><rect x="224" y="128" width="16" height="16" fill="#1f222b"/><rect x="240" y="128" width="16" height="16" fill="#1f222b"/><rect x="256" y="128" width="13" height="16" fill="#1f222b"/><rect x="0" y="144" width="16" height="16" fill="#53565f"/><rect x="16" y="144" width="16" height="16" fill="#6f7072"/><rect x="32" y="144" width="16" height="16" fill="#62686a"/><rect x="48" y="144" width="16" height="16" fill="#646366"/><rect x="64" y="144" width="16" height="16" fill="#6a6d6e"/><rect x="80" y="144" width="16" height="16" fill="#616163"/><rect x="96" y="144" width="16" height="16" fill="#616163"/><rect x="112" y="144" width="16" height="16" fill="#717175"/><rect x="128" y="144" width="16" height="16" fill="#6c6d70"/><rect x="144" y="144" width="16" height="16" fill="#6d6d70"/><rect x="160" y="144" width="16" height="16" fill="#6e6e70"/><rect x="176" y="144" width="16" height="16" fill="#6c6c6f"/><rect x="192" y="144" width="16" height="16" fill="#6b6b6e"/><rect x="208" y="144" width="16" height="16" fill="#737377"/><rect x="224" y="144" width="16" height="16" fill="#6f6f71"/><rect x="240" y="144" width="16" height="16" fill="#717175"/><rect x="256" y="144" width="13" height="16" fill="#3a3a38"/><rect x="0" y="160" width="16" height="16" fill="#1f222b"/><rect x="16" y="160" width="16" height="16" fill="#1f222b"/><rect x="32" y="160" width="16" height="16" fill="#1f222b"/><rect x="48" y="160" width="16" height="16" fill="#1f222b"/><rect x="64" y="160" width="16" height="16" fill="#1f222b"/><rect x="80" y="160" width="16" height="16" fill="#1f222b"/><rect x="96" y="160" width="16" height="16" fill="#1f222b"/><rect x="112" y="160" width="16" height="16" fill="#1f222b"/><rect x="128" y="160" width="16" height="16" fill="#1f222b"/><rect x="144" y="160" width="16" height="16" fill="#1f222b"/><rect x="160" y="160" width="16" height="16" fill="#1f222b"/><rect x="176" y="160" width="16" height="16" fill="#1f222b"/><rect x="192" y="160" width="16" height="16" fill="#1f222b"/><rect x="208" y="160" width="16" height="16" fill="#1f222b"/><rect x="224" y="160" width="16" height="16" fill="#1f222b"/><rect x="240" y="160" width="16" height="16" fill="#1f222b"/><rect x="256" y="160" width="13" height="16" fill="#1f222b"/><rect x="0" y="176" width="16" height="16" fill="#53565f"/><rect x="16" y="176" width="16" height="16" fill="#6f7072"/><rect x="32" y="176" width="16" height="16" fill="#62686a"/><rect x="48" y="176" width="16" height="16" fill="#646366"/><rect x="64" y="176" width="16" height="16" fill="#6a6d6e"/><rect x="80" y="176" width="16" height="16" fill="#616163"/><rect x="96" y="176" width="16" height="16" fill="#616163"/><rect x="112" y="176" width="16" height="16" fill="#717175"/><rect x="128" y="176" width="16" height="16" fill="#6a6e70"/><rect x="144" y="176" width="16" height="16" fill="#6e7072"/><rect x="160" y="176" width="16" height="16" fill="#6e7072"/><rect x="176" y="176" width="16" height="16" fill="#6c6d70"/><rect x="192" y="176" width="16" height="16" fill="#737377"/><rect x="208" y="176" width="16" height="16" fill="#6c6c70"/><rect x="224" y="176" width="16" height="16" fill="#6e6e71"/><rect x="240" y="176" width="16" height="16" fill="#5a5a5c"/><rect x="256" y="176" width="13" height="16" fill="#1f222b"/><rect x="0" y="192" width="16" height="16" fill="#1f222b"/><rect x="16" y="192" width="16" height="16" fill="#1f222b"/><rect x="32" y="192" width="16" height="16" fill="#1f222b"/><rect x="48" y="192" width="16" height="16" fill="#1f222b"/><rect x="64" y="192" width="16" height="16" fill="#1f222b"/><rect x="80" y="192" width="16" height="16" fill="#1f222b"/><rect x="96" y="192" width="16" height="16" fill="#1f222b"/><rect x="112" y="192" width="16" height="16" fill="#1f222b"/><rect x="128" y="192" width="16" height="16" fill="#1f222b"/><rect x="144" y="192" width="16" height="16" fill="#1f222b"/><rect x="160" y="192" width="16" height="16" fill="#1f222b"/><rect x="176" y="192" width="16" height="16" fill="#1f222b"/><rect x="192" y="192" width="16" height="16" fill="#1f222b"/><rect x="208" y="192" width="16" height="16" fill="#1f222b"/><rect x="224" y="192" width="16" height="16" fill="#1f222b"/><rect x="240" y="192" width="16" height="16" fill="#1f222b"/><rect x="256" y="192" width="13" height="16" fill="#1f222b"/><rect x="0" y="208" width="16" height="16" fill="#41444d"/><rect x="16" y="208" width="16" height="16" fill="#5e5f62"/><rect x="32" y="208" width="16" height="16" fill="#4f5556"/><rect x="48" y="208" width="16" height="16" fill="#555356"/><rect x="64" y="208" width="16" height="16" fill="#5d6061"/><rect x="80" y="208" width="16" height="16" fill="#4d4c50"/><rect x="96" y="208" width="16" height="16" fill="#4e4d50"/><rect x="112" y="208" width="16" height="16" fill="#5f5f61"/><rect x="128" y="208" width="16" height="16" fill="#52575b"/><rect x="144" y="208" width="16" height="16" fill="#5f6263"/><rect x="160" y="208" width="16" height="16" fill="#525354"/><rect x="176" y="208" width="16" height="16" fill="#5b5f62"/><rect x="192" y="208" width="16" height="16" fill="#5b5f62"/><rect x="208" y="208" width="16" height="16" fill="#5d5c5e"/><rect x="224" y="208" width="16" height="16" fill="#58585c"/><rect x="240" y="208" width="16" height="16" fill="#585c60"/><rect x="256" y="208" width="13" height="16" fill="#23262d"/><rect x="0" y="224" width="16" height="16" fill="#3a3d46"/><rect x="16" y="224" width="16" height="16" fill="#434144"/><rect x="32" y="224" width="16" height="16" fill="#3a3e45"/><rect x="48" y="224" width="16" height="16" fill="#3c3c40"/><rect x="64" y="224" width="16" height="16" fill="#3e4044"/><rect x="80" y="224" width="16" height="16" fill="#3f3f44"/><rect x="96" y="224" width="16" height="16" fill="#3d3d41"/><rect x="112" y="224" width="16" height="16" fill="#434347"/><rect x="128" y="224" width="16" height="16" fill="#434347"/><rect x="144" y="224" width="16" height="16" fill="#3e3e42"/><rect x="160" y="224" width="16" height="16" fill="#434145"/><rect x="176" y="224" width="16" height="16" fill="#434347"/><rect x="192" y="224" width="16" height="16" fill="#434347"/><rect x="208" y="224" width="16" height="16" fill="#3f3f43"/><rect x="224" y="224" width="16" height="16" fill="#3b3e43"/><rect x="240" y="224" width="16" height="16" fill="#3e4044"/><rect x="256" y="224" width="13" height="16" fill="#23262d"/><rect x="0" y="240" width="16" height="16" fill="#3e414a"/><rect x="16" y="240" width="16" height="16" fill="#4e4e51"/><rect x="32" y="240" width="16" height="16" fill="#464a4c"/><rect x="48" y="240" width="16" height="16" fill="#4a484b"/><rect x="64" y="240" width="16" height="16" fill="#484b4d"/><rect x="80" y="240" width="16" height="16" fill="#454549"/><rect x="96" y="240" width="16" height="16" fill="#484a4c"/><rect x="112" y="240" width="16" height="16" fill="#4d4d50"/><rect x="128" y="240" width="16" height="16" fill="#4b4b4f"/><rect x="144" y="240" width="16" height="16" fill="#525255"/><rect x="160" y="240" width="16" height="16" fill="#4e4d50"/><rect x="176" y="240" width="16" height="16" fill="#525254"/><rect x="192" y="240" width="16" height="16" fill="#484b55"/><rect x="208" y="240" width="16" height="16" fill="#5a5a5c"/><rect x="224" y="240" width="16" height="16" fill="#4a4a4d"/><rect x="240" y="240" width="16" height="16" fill="#4a4b4e"/><rect x="256" y="240" width="13" height="16" fill="#3e3e40"/><rect x="0" y="256" width="16" height="16" fill="#424550"/><rect x="16" y="256" width="16" height="16" fill="#5e5e60"/><rect x="32" y="256" width="16" height="16" fill="#4d5355"/><rect x="48" y="256" width="16" height="16" fill="#4f4d50"/><rect x="64" y="256" width="16" height="16" fill="#5a5e60"/><rect x="80" y="256" width="16" height="16" fill="#4b4a4e"/><rect x="96" y="256" width="16" height="16" fill="#48474a"/><rect x="112" y="256" width="16" height="16" fill="#5d5d5f"/><rect x="128" y="256" width="16" height="16" fill="#3e434a"/><rect x="144" y="256" width="16" height="16" fill="#5d5e5f"/><rect x="160" y="256" width="16" height="16" fill="#4f4f52"/><rect x="176" y="256" width="16" height="16" fill="#575a5c"/><rect x="192" y="256" width="16" height="16" fill="#4d505a"/><rect x="208" y="256" width="16" height="16" fill="#636164"/><rect x="224" y="256" width="16" height="16" fill="#505254"/><rect x="240" y="256" width="16" height="16" fill="#5a5d60"/><rect x="256" y="256" width="13" height="16" fill="#3e3e40"/><rect x="0" y="272" width="16" height="16" fill="#2b2e36"/><rect x="16" y="272" width="16" height="16" fill="#2b2e36"/><rect x="32" y="272" width="16" height="16" fill="#282b33"/><rect x="48" y="272" width="16" height="16" fill="#282b33"/><rect x="64" y="272" width="16" height="16" fill="#333234"/><rect x="80" y="272" width="16" height="16" fill="#23262c"/><rect x="96" y="272" width="16" height="16" fill="#2c2f36"/><rect x="112" y="272" width="16" height="16" fill="#363940"/><rect x="128" y="272" width="16" height="16" fill="#363638"/><rect x="144" y="272" width="16" height="16" fill="#262a33"/><rect x="160" y="272" width="16" height="16" fill="#2b2e37"/><rect x="176" y="272" width="16" height="16" fill="#2c2f37"/><rect x="192" y="272" width="16" height="16" fill="#2c2b32"/><rect x="208" y="272" width="16" height="16" fill="#3a3a3c"/><rect x="224" y="272" width="16" height="16" fill="#2c2e35"/><rect x="240" y="272" width="16" height="16" fill="#393c43"/><rect x="256" y="272" width="13" height="16" fill="#23262d"/><rect x="0" y="288" width="16" height="16" fill="#53565f"/><rect x="16" y="288" width="16" height="16" fill="#6f7072"/><rect x="32" y="288" width="16" height="16" fill="#62686a"/><rect x="48" y="288" width="16" height="16" fill="#646366"/><rect x="64" y="288" width="16" height="16" fill="#6a6d6e"/><rect x="80" y="288" width="16" height="16" fill="#616163"/><rect x="96" y="288" width="16" height="16" fill="#616163"/><rect x="112" y="288" width="16" height="16" fill="#717175"/><rect x="128" y="288" width="16" height="16" fill="#626366"/><rect x="144" y="288" width="16" height="16" fill="#6a6e70"/><rect x="160" y="288" width="16" height="16" fill="#6e7070"/><rect x="176" y="288" width="16" height="16" fill="#717476"/><rect x="192" y="288" width="16" height="16" fill="#6e6e70"/><rect x="208" y="288" width="16" height="16" fill="#707272"/><rect x="224" y="288" width="16" height="16" fill="#6e6f71"/><rect x="240" y="288" width="16" height="16" fill="#6a6d70"/><rect x="256" y="288" width="13" height="16" fill="#3a3432"/><rect x="0" y="304" width="16" height="16" fill="#1f222b"/><rect x="16" y="304" width="16" height="16" fill="#1f222b"/><rect x="32" y="304" width="16" height="16" fill="#1f222b"/><rect x="48" y="304" width="16" height="16" fill="#1f222b"/><rect x="64" y="304" width="16" height="16" fill="#1f222b"/><rect x="80" y="304" width="16" height="16" fill="#1f222b"/><rect x="96" y="304" width="16" height="16" fill="#1f222b"/><rect x="112" y="304" width="16" height="16" fill="#1f222b"/><rect x="128" y="304" width="16" height="16" fill="#1f222b"/><rect x="144" y="304" width="16" height="16" fill="#1f222b"/><rect x="160" y="304" width="16" height="16" fill="#1f222b"/><rect x="176" y="304" width="16" height="16" fill="#1f222b"/><rect x="192" y="304" width="16" height="16" fill="#1f222b"/><rect x="208" y="304" width="16" height="16" fill="#1f222b"/><rect x="224" y="304" width="16" height="16" fill="#1f222b"/><rect x="240" y="304" width="16" height="16" fill="#1f222b"/><rect x="256" y="304" width="13" height="16" fill="#1f222b"/><rect x="0" y="320" width="16" height="16" fill="#53565f"/><rect x="16" y="320" width="16" height="16" fill="#707070"/><rect x="32" y="320" width="16" height="16" fill="#64686c"/><rect x="48" y="320" width="16" height="16" fill="#6d6d6e"/><rect x="64" y="320" width="16" height="16" fill="#717273"/><rect x="80" y="320" width="16" height="16" fill="#646367"/><rect x="96" y="320" width="16" height="16" fill="#737373"/><rect x="112" y="320" width="16" height="16" fill="#646567"/><rect x="128" y="320" width="16" height="16" fill="#6f7072"/><rect x="144" y="320" width="16" height="16" fill="#6b6b6b"/><rect x="160" y="320" width="16" height="16" fill="#737476"/><rect x="176" y="320" width="16" height="16" fill="#646566"/><rect x="192" y="320" width="16" height="16" fill="#68686d"/><rect x="208" y="320" width="16" height="16" fill="#6c6a6c"/><rect x="224" y="320" width="16" height="16" fill="#6d7273"/><rect x="240" y="320" width="16" height="16" fill="#686666"/><rect x="256" y="320" width="13" height="16" fill="#1f222b"/><rect x="0" y="336" width="16" height="16" fill="#1f222b"/><rect x="16" y="336" width="16" height="16" fill="#1f222b"/><rect x="32" y="336" width="16" height="16" fill="#1f222b"/><rect x="48" y="336" width="16" height="16" fill="#1f222b"/><rect x="64" y="336" width="16" height="16" fill="#1f222b"/><rect x="80" y="336" width="16" height="16" fill="#1f222b"/><rect x="96" y="336" width="16" height="16" fill="#1f222b"/><rect x="112" y="336" width="16" height="16" fill="#1f222b"/><rect x="128" y="336" width="16" height="16" fill="#1f222b"/><rect x="144" y="336" width="16" height="16" fill="#1f222b"/><rect x="160" y="336" width="16" height="16" fill="#1f222b"/><rect x="176" y="336" width="16" height="16" fill="#1f222b"/><rect x="192" y="336" width="16" height="16" fill="#1f222b"/><rect x="208" y="336" width="16" height="16" fill="#1f222b"/><rect x="224" y="336" width="16" height="16" fill="#1f222b"/><rect x="240" y="336" width="16" height="16" fill="#1f222b"/><rect x="256" y="336" width="13" height="16" fill="#1f222b"/><rect x="0" y="352" width="16" height="16" fill="#53565f"/><rect x="16" y="352" width="16" height="16" fill="#6f7072"/><rect x="32" y="352" width="16" height="16" fill="#62686a"/><rect x="48" y="352" width="16" height="16" fill="#646366"/><rect x="64" y="352" width="16" height="16" fill="#6a6d6e"/><rect x="80" y="352" width="16" height="16" fill="#616163"/><rect x="96" y="352" width="16" height="16" fill="#616163"/><rect x="112" y="352" width="16" height="16" fill="#717175"/><rect x="128" y="352" width="16" height="16" fill="#656a72"/><rect x="144" y="352" width="16" height="16" fill="#6e6c6c"/><rect x="160" y="352" width="16" height="16" fill="#646366"/><rect x="176" y="352" width="16" height="16" fill="#6f6f72"/><rect x="192" y="352" width="16" height="16" fill="#707073"/><rect x="208" y="352" width="16" height="16" fill="#717173"/><rect x="224" y="352" width="16" height="16" fill="#6e706e"/><rect x="240" y="352" width="16" height="16" fill="#6f7072"/><rect x="256" y="352" width="13" height="16" fill="#1f222b"/></svg>
<svg class="abs" style="left:426px;top:929px" width="284" height="44" shape-rendering="crispEdges"><rect x="0" y="0" width="16" height="16" fill="#5d6064"/><rect x="16" y="0" width="16" height="16" fill="#626366"/><rect x="32" y="0" width="16" height="16" fill="#737476"/><rect x="48" y="0" width="16" height="16" fill="#6a6b6d"/><rect x="64" y="0" width="16" height="16" fill="#67686a"/><rect x="80" y="0" width="16" height="16" fill="#747577"/><rect x="96" y="0" width="16" height="16" fill="#292c33"/><rect x="0" y="16" width="16" height="16" fill="#5c5d5f"/><rect x="16" y="16" width="16" height="16" fill="#676b6f"/><rect x="32" y="16" width="16" height="16" fill="#626465"/><rect x="48" y="16" width="16" height="16" fill="#6a6b6d"/><rect x="64" y="16" width="16" height="16" fill="#626466"/><rect x="80" y="16" width="16" height="16" fill="#68686b"/><rect x="96" y="16" width="16" height="16" fill="#6d6e70"/><rect x="112" y="16" width="16" height="16" fill="#656566"/><rect x="128" y="16" width="16" height="16" fill="#6e6f72"/><rect x="144" y="16" width="16" height="16" fill="#65696c"/><rect x="160" y="16" width="16" height="16" fill="#5d6265"/><rect x="176" y="16" width="16" height="16" fill="#676768"/><rect x="192" y="16" width="16" height="16" fill="#5f6063"/><rect x="208" y="16" width="16" height="16" fill="#68666a"/><rect x="224" y="16" width="16" height="16" fill="#5c626a"/><rect x="240" y="16" width="16" height="16" fill="#686667"/><rect x="256" y="16" width="16" height="16" fill="#5c5a5e"/><rect x="272" y="16" width="12" height="16" fill="#5b5d5d"/><rect x="0" y="32" width="16" height="12" fill="#24262c"/><rect x="16" y="32" width="16" height="12" fill="#3d4044"/><rect x="32" y="32" width="16" height="12" fill="#2f3239"/><rect x="48" y="32" width="16" height="12" fill="#46474a"/><rect x="64" y="32" width="16" height="12" fill="#3a3b3e"/><rect x="80" y="32" width="16" height="12" fill="#3d4144"/><rect x="96" y="32" width="16" height="12" fill="#3b3c3e"/><rect x="112" y="32" width="16" height="12" fill="#3c3c3f"/><rect x="128" y="32" width="16" height="12" fill="#363c44"/><rect x="144" y="32" width="16" height="12" fill="#3f4245"/><rect x="160" y="32" width="16" height="12" fill="#404245"/><rect x="176" y="32" width="16" height="12" fill="#38383b"/><rect x="192" y="32" width="16" height="12" fill="#383b40"/><rect x="208" y="32" width="16" height="12" fill="#3e3f44"/><rect x="224" y="32" width="16" height="12" fill="#323235"/><rect x="240" y="32" width="16" height="12" fill="#3c4044"/><rect x="256" y="32" width="16" height="12" fill="#36383c"/><rect x="272" y="32" width="12" height="12" fill="#38393c"/></svg>
<div class="abs" style="left:282px;top:1613px;width:800px;height:76px;background:#131419;border:1px solid #0e0f13;border-radius:4px">
  <div class="abs" style="left:10px;top:11px;font-size:16px;line-height:20px;color:#6b6f78;white-space:nowrap;letter-spacing:-0.13px">Décrivez quelles actions ont été prises, ou toute autre mise à jour…</div>
  <svg class="abs" style="right:1px;bottom:1px" width="12" height="12" viewBox="0 0 12 12"><path d="M11 2L2 11M11 6L6 11M11 9.5L9.5 11" stroke="#6a6a6a" stroke-width="1"/></svg>
</div>
<div class="abs" style="left:282px;top:1705px;width:800px;height:38px;background:#2b90d9;border-radius:4px;text-align:center;font-size:18px;line-height:38px;color:#fff;letter-spacing:-0.95px;-webkit-text-stroke:0.5px #fff">LAISSER UNE REMARQUE</div>

<svg width="16" height="16" viewBox="0 0 16 16" style="position:absolute;left:738px;top:465px">
<path d="M1.2 1.2 L5 4 C6.8 3.4 9.2 3.4 11 4 L14.8 1.2 L14.6 7 C15 8 15.2 9 15.2 10 C15.2 13.6 12 16 8 16 C4 16 .8 13.6 .8 10 C.8 9 1 8 1.4 7 Z" fill="#fcc43f"/>
<path d="M3.5 7.2 C4.5 6.4 5.6 6.6 6.2 7.2 M9.8 7.2 C10.4 6.6 11.5 6.4 12.5 7.2" stroke="#664500" stroke-width=".9" fill="none"/>
<path d="M3.2 10.5 C5 10 11 10 12.8 10.5 C12.5 13 10.5 14.2 8 14.2 C5.5 14.2 3.5 13 3.2 10.5Z" fill="#664500"/>
<path d="M4.2 11 C6 10.6 10 10.6 11.8 11 L11.6 11.8 C10 11.5 6 11.5 4.4 11.8Z" fill="#fff"/>
<circle cx="8" cy="9.2" r=".8" fill="#f4707f"/>
<path d="M0 15 C0 12.5 1.5 11 2.6 9.8 C3.2 11 4 12.5 4 13.8 C4 15 3 16 2 16 C.8 16 0 15.6 0 15Z" fill="#5dadec"/>
<path d="M16 15 C16 12.5 14.5 11 13.4 9.8 C12.8 11 12 12.5 12 13.8 C12 15 13 16 14 16 C15.2 16 16 15.6 16 15Z" fill="#5dadec"/>
</svg>

<svg class="abs" style="left:490px;top:292px" width="18" height="18" viewBox="0 0 18 18"><path d="M2 8.2L10.5 2.3l6 4.3" fill="none" stroke="#6e6e6e" stroke-width="1.3"/><path d="M4 7v9" stroke="#6e6e6e" stroke-width="1.2"/><path d="M7 15.5h9.5" stroke="#6e6e6e" stroke-width="1" stroke-dasharray="1 1.4"/></svg>
</body></html>
